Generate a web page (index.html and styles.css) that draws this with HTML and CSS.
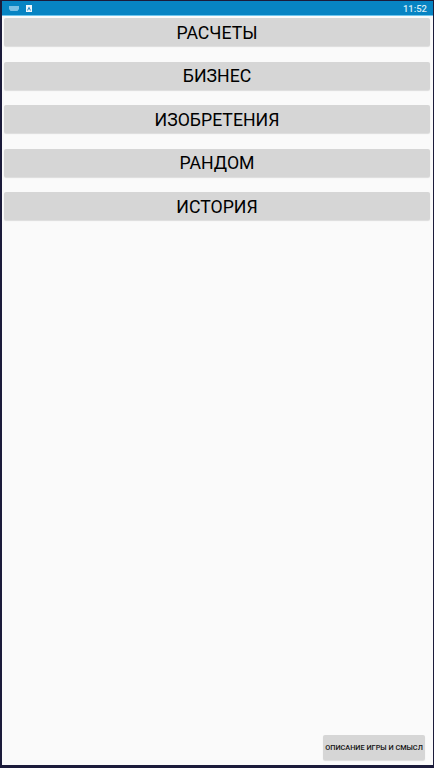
FILE: index.html
```html
<!DOCTYPE html>
<html lang="en">
<head>
    <meta charset="UTF-8">
    <meta name="viewport" content="width=device-width, initial-scale=1.0">
    <title>Меню</title>
    <link rel="stylesheet" href="styles.css">
</head>
<body>

<div class="screen">
    <div class="status-bar">
        <div class="status-icons">
            <svg class="icon-keyboard" width="10" height="5" viewBox="0 0 10 5">
                <path d="M0 0h10v3L8.500 5h-7L0 3z" fill="#7cc0e4"/>
            </svg>
            <svg class="icon-note" width="6" height="7" viewBox="0 0 6 7">
                <rect width="6" height="7" fill="#eef7fc"/>
                <path d="M3 1.500L5 5.500H4L3 3.500 2 5.500H1z" fill="#1a7fb8"/>
            </svg>
        </div>
        <span class="clock">11:52</span>
    </div>

    <div class="menu">
        <button class="button">РАСЧЕТЫ</button>
        <button class="button">БИЗНЕС</button>
        <button class="button">ИЗОБРЕТЕНИЯ</button>
        <button class="button">РАНДОМ</button>
        <button class="button">ИСТОРИЯ</button>
    </div>

    <div class="footer">
        <button class="button-small">ОПИСАНИЕ ИГРЫ И СМЫСЛ</button>
    </div>
</div>

</body>
</html>
```

FILE: styles.css
```css
html, body {
    margin: 0;
    padding: 0;
}
body {
    width: 434px;
    height: 768px;
    overflow: hidden;
    font-family: Roboto, "Liberation Sans", sans-serif;
    background-color: #fafafa;
}
.screen {
    box-sizing: border-box;
    width: 434px;
    height: 768px;
    display: flex;
    flex-direction: column;
    border: solid #1b1b3a;
    border-width: 1px 1px 3px 2px;
    background-color: #fafafa;
}
.status-bar {
    display: flex;
    justify-content: space-between;
    align-items: center;
    height: 14px;
    padding: 0 6px 0 7px;
    background-color: #0784c3;
    border-bottom: 1px solid #6fc6ee;
    flex-shrink: 0;
}
.status-icons {
    display: flex;
    align-items: center;
    gap: 7px;
}
.clock {
    font-size: 9.5px;
    font-weight: 500;
    color: #d8ecf7;
}
.menu {
    display: flex;
    flex-direction: column;
    gap: 15.5px;
    padding: 2px 3px 0 2px;
}
.button {
    height: 28px;
    padding: 1px 0 0 0;
    border: none;
    border-radius: 2px;
    background-color: #d6d6d6;
    box-shadow: 0 1px 1px rgba(0, 0, 0, 0.12);
    font-family: inherit;
    font-size: 17.7px;
    color: #000;
}
.footer {
    margin-top: auto;
    display: flex;
    justify-content: flex-end;
    padding: 0 8px 5px 0;
}
.button-small {
    width: 102px;
    height: 25px;
    padding: 0;
    border: none;
    border-radius: 2px;
    background-color: #d6d6d6;
    box-shadow: 0 1px 1px rgba(0, 0, 0, 0.12);
    font-family: inherit;
    font-size: 7.3px;
    font-weight: 500;
    white-space: nowrap;
    color: #111;
}
```
